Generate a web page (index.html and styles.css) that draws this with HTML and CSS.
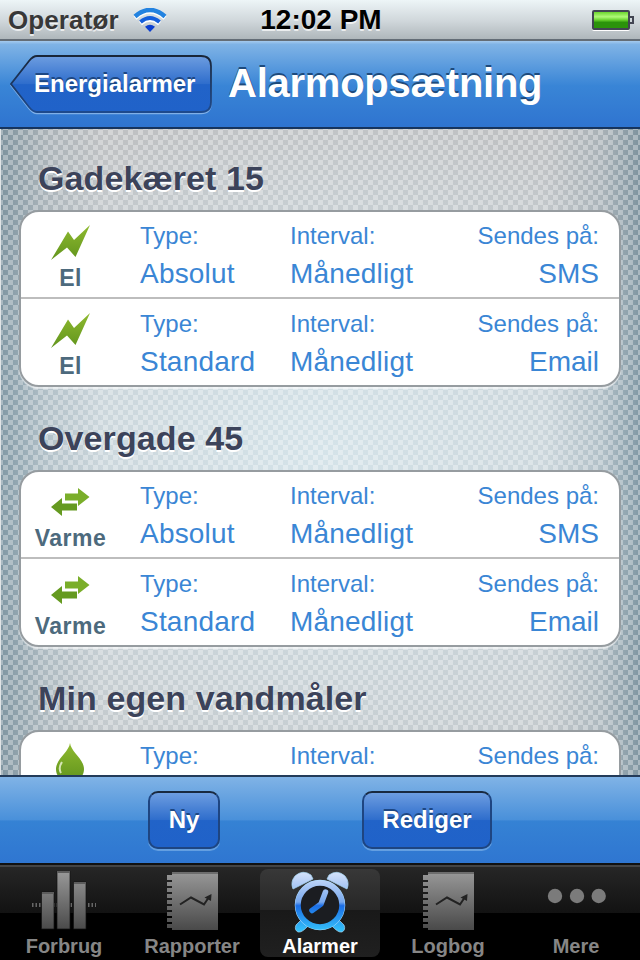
FILE: index.html
```
<!doctype html>
<html lang="da">
<head>
	<meta charset="UTF-8">
	<meta name="viewport" content="width=device-width, initial-scale=1.0">
	<title>Alarmopsætning</title>
	<link rel="stylesheet" href="styles.css">
</head>
<body>
	<!-- shared shapes -->
	<svg class="defs" width="0" height="0">
		<defs>
			<linearGradient id="green" x1="0" y1="0" x2="0" y2="1">
				<stop offset="0" stop-color="#8fba2f"/>
				<stop offset="1" stop-color="#61941d"/>
			</linearGradient>
			<linearGradient id="gray" gradientUnits="userSpaceOnUse" x1="0" y1="0" x2="0" y2="60">
				<stop offset="0" stop-color="#999"/>
				<stop offset="1" stop-color="#484848"/>
			</linearGradient>
			<symbol id="bolt" viewBox="0 0 40 36">
				<path fill="url(#green)" d="M39 0 L24.500 32 L16 22.500 L0 35 L17 6.500 L23 15 Z"/>
			</symbol>
			<symbol id="arrows" viewBox="0 0 40 30">
				<path fill="#7aae2a" d="M14 5.500 H27 V0 L38.500 9 L27 18 V12.500 H14 Z"/>
				<path fill="#659a20" d="M26 15.500 H11 V10 L0 19 L11 28 V22.500 H26 Z"/>
			</symbol>
			<symbol id="drop" viewBox="0 0 30 38">
				<path fill="url(#green)" d="M15 0 C16 9 29 16 29 26 C29 34 23 38 15 38 C7 38 1 34 1 26 C1 16 14 9 15 0 Z"/>
				<path fill="none" stroke="#d6e6b5" stroke-width="2" d="M7 19 Q3 25 6 30"/>
			</symbol>
			<symbol id="notebook" viewBox="0 0 54 60">
				<path fill="url(#gray)" d="M7 1 H53 V59 H7 V57 H2 V53 H7 V51 H2 V47 H7 V45 H2 V41 H7 V39 H2 V35 H7 V33 H2 V29 H7 V27 H2 V23 H7 V21 H2 V17 H7 V15 H2 V11 H7 V9 H2 V4 H7 Z"/>
				<path fill="#6d6d6d" d="M7 1 H53 V3 H7 Z"/>
				<path fill="none" stroke="#222" stroke-width="2" d="M15 33.500 L26 26.500 L39 33.500 L44 26"/>
				<path fill="#222" d="M46.500 23 L39.500 26.500 L46 30 Z"/>
			</symbol>
		</defs>
	</svg>

	<div class="phone">
		<header class="status">
			<div class="carrier">Operatør
				<svg class="wifi" width="34" height="26" viewBox="0 0 34 26">
					<g fill="none" stroke="#fff" stroke-width="4.500" transform="translate(0 1.500)">
						<path d="M2 8.500 Q17 -4.500 32 8.500"/>
						<path d="M7.500 14 Q17 6 26.500 14"/>
					</g>
					<path fill="none" stroke="#2383e0" stroke-width="4.500" d="M2 8.500 Q17 -4.500 32 8.500"/>
					<path fill="none" stroke="#145fdc" stroke-width="4" d="M7.500 14 Q17 6 26.500 14"/>
					<path fill="#0c3fd0" d="M17 24 L12 18.800 Q17 14.500 22 18.800 Z"/>
				</svg>
			</div>
			<div class="clock">12:02 PM</div>
			<div class="battery"><span class="level"></span><span class="cap"></span></div>
		</header>

		<nav class="navbar">
			<a class="back">
				<svg class="back-shape" width="203" height="60" viewBox="0 0 203 60">
					<defs>
						<linearGradient id="btn" x1="0" y1="0" x2="0" y2="1">
							<stop offset="0" stop-color="#6d9de0"/>
							<stop offset=".5" stop-color="#2e6dcc"/>
							<stop offset=".51" stop-color="#2163c8"/>
							<stop offset="1" stop-color="#2062c9"/>
						</linearGradient>
						<linearGradient id="edge" x1="0" y1="0" x2="0" y2="1">
							<stop offset="0" stop-color="#192638"/>
							<stop offset="1" stop-color="#1e4a8d"/>
						</linearGradient>
					</defs>
					<path fill="none" stroke="#7fb0e8" stroke-width="1.500" transform="translate(0 1.500)" d="M27 1 H191 Q201 1 201 11 V47 Q201 57 191 57 H27 Q23 57 19 52 L1 29 L19 6 Q23 1 27 1 Z"/>
					<path fill="url(#btn)" stroke="url(#edge)" stroke-width="1.800" d="M27 1 H191 Q201 1 201 11 V47 Q201 57 191 57 H27 Q23 57 19 52 L1 29 L19 6 Q23 1 27 1 Z"/>
				</svg>
				<span class="back-text">Energialarmer</span>
			</a>
			<h1>Alarmopsætning</h1>
		</nav>

		<main class="content">
			<section>
				<h2>Gadekæret 15</h2>
				<div class="card">
					<div class="row">
						<div class="kind"><svg width="40" height="36"><use href="#bolt"/></svg><b>El</b></div>
						<div class="col type"><span>Type:</span><p>Absolut</p></div>
						<div class="col"><span>Interval:</span><p>Månedligt</p></div>
						<div class="col send"><span>Sendes på:</span><p>SMS</p></div>
					</div>
					<div class="row">
						<div class="kind"><svg width="40" height="36"><use href="#bolt"/></svg><b>El</b></div>
						<div class="col type"><span>Type:</span><p>Standard</p></div>
						<div class="col"><span>Interval:</span><p>Månedligt</p></div>
						<div class="col send"><span>Sendes på:</span><p>Email</p></div>
					</div>
				</div>
			</section>
			<section>
				<h2>Overgade 45</h2>
				<div class="card">
					<div class="row">
						<div class="kind"><svg class="low" width="40" height="30"><use href="#arrows"/></svg><b>Varme</b></div>
						<div class="col type"><span>Type:</span><p>Absolut</p></div>
						<div class="col"><span>Interval:</span><p>Månedligt</p></div>
						<div class="col send"><span>Sendes på:</span><p>SMS</p></div>
					</div>
					<div class="row">
						<div class="kind"><svg class="low" width="40" height="30"><use href="#arrows"/></svg><b>Varme</b></div>
						<div class="col type"><span>Type:</span><p>Standard</p></div>
						<div class="col"><span>Interval:</span><p>Månedligt</p></div>
						<div class="col send"><span>Sendes på:</span><p>Email</p></div>
					</div>
				</div>
			</section>
			<section>
				<h2>Min egen vandmåler</h2>
				<div class="card">
					<div class="row">
						<div class="kind water"><svg width="30" height="38"><use href="#drop"/></svg></div>
						<div class="col type"><span>Type:</span></div>
						<div class="col"><span>Interval:</span></div>
						<div class="col send"><span>Sendes på:</span></div>
					</div>
				</div>
			</section>
		</main>

		<div class="toolbar">
			<button type="button" class="new">Ny</button>
			<button type="button" class="edit">Rediger</button>
		</div>

		<footer class="tabs">
			<div class="tab">
				<svg width="66" height="60" viewBox="0 0 66 60">
					<path stroke="#666" stroke-width="4" stroke-dasharray="1.500 2" d="M1 34 H65"/>
					<path fill="url(#gray)" stroke="#111" stroke-width=".7" d="M10.500 21 H23 V58 H10.500 Z M26 0 H39 V58 H26 Z M42.500 11 H55 V58 H42.500 Z"/>
					<path fill="#5c5c5c" d="M11 21 H23 V23 H11 Z M26 0 H39 V2 H26 Z M43 11 H55 V13 H43 Z"/>
				</svg>
				<span>Forbrug</span>
			</div>
			<div class="tab">
				<svg width="54" height="60"><use href="#notebook"/></svg>
				<span>Rapporter</span>
			</div>
			<div class="tab active">
				<svg width="60" height="62" viewBox="0 0 60 62">
					<defs>
						<linearGradient id="clock" gradientUnits="userSpaceOnUse" x1="0" y1="0" x2="0" y2="62">
							<stop offset="0" stop-color="#d9e5fb"/>
							<stop offset=".5" stop-color="#78a8ed"/>
							<stop offset=".56" stop-color="#1c6ee6"/>
							<stop offset="1" stop-color="#36c8fb"/>
						</linearGradient>
					</defs>
					<g fill="url(#clock)" stroke="#a8d8f5" stroke-width=".7">
						<path d="M3 18 Q0 11 5 5 Q13 -2 21 4 L23 8 Z"/>
						<path d="M57 18 Q60 11 55 5 Q47 -2 39 4 L37 8 Z"/>
						<path d="M12 48 L6 54 Q4 59 8 61 Q12 62 19 54 Z M48 48 L54 54 Q56 59 52 61 Q48 62 41 54 Z"/>
					</g>
					<circle cx="30" cy="34" r="22" fill="none" stroke="#aadcff" stroke-width="6.500"/>
					<circle cx="30" cy="34" r="22" fill="#1b1d21" stroke="url(#clock)" stroke-width="5.500"/>
					<path fill="none" stroke="url(#clock)" stroke-width="5.500" stroke-linecap="round" stroke-linejoin="round" d="M35.500 21 L31 33 L22 39.500"/>
				</svg>
				<span>Alarmer</span>
			</div>
			<div class="tab">
				<svg width="54" height="60"><use href="#notebook"/></svg>
				<span>Logbog</span>
			</div>
			<div class="tab">
				<svg width="60" height="60" viewBox="0 0 60 60">
					<g fill="#7b7b7b">
						<circle cx="9" cy="25" r="7.200"/>
						<circle cx="31" cy="25" r="7.200"/>
						<circle cx="52.700" cy="25" r="7.200"/>
					</g>
				</svg>
				<span>Mere</span>
			</div>
		</footer>
	</div>
</body>
</html>
```

FILE: styles.css
```
* {
	margin: 0;
	padding: 0;
	box-sizing: border-box;
}
body {
	background: #000;
	font-family: "Liberation Sans", Arial, Helvetica, sans-serif;
}
.defs {
	display: block;
}
.phone {
	display: flex;
	flex-direction: column;
	width: 640px;
	height: 960px;
	overflow: hidden;
}

/* status bar */
.status {
	display: grid;
	grid-template-columns: 1fr auto 1fr;
	align-items: center;
	height: 41px;
	padding: 1px 6px 0 8px;
	background: linear-gradient(#edf5f7, #cfd6da 55%, #afb7bb);
	border-bottom: 2px solid #646d76;
	font-weight: bold;
	text-shadow: 0 2px 0 rgba(255, 255, 255, 0.7);
}
.carrier {
	display: flex;
	align-items: center;
	gap: 14px;
	padding-top: 1px;
	font-size: 26px;
	letter-spacing: 0.1px;
	color: #383838;
}
.clock {
	font-size: 28px;
}
.battery {
	display: flex;
	align-items: center;
	justify-self: end;
}
.level {
	width: 38px;
	height: 20px;
	border: 2px solid #424552;
	border-radius: 2px;
	background: linear-gradient(#6bd52e, #b0f878 30%, #68d22d 50%, #2b930b 65%, #2b930b);
	box-shadow: 0 1px 0 #fff;
}
.cap {
	width: 4px;
	height: 8px;
	border: 2px solid #424552;
	border-left: 0;
}

/* navigation bar */
.navbar {
	display: flex;
	align-items: center;
	gap: 15px;
	height: 88px;
	padding: 2px 0 0 10px;
	background: linear-gradient(#a5caee, #7fb3e6 4%, #3985d6 52%, #2f74d0);
	border-bottom: 2px solid #16345e;
}
.back {
	display: grid;
	align-items: center;
}
.back-shape, .back-text {
	grid-area: 1 / 1;
}
.back-text {
	padding: 0 0 2px 24px;
	font-size: 24px;
	font-weight: bold;
	color: #fff;
	text-shadow: 0 -2px 0 #1d4783;
}
h1 {
	padding-bottom: 4px;
	font-size: 40px;
	line-height: 46px;
	letter-spacing: -0.25px;
	color: #fff;
	text-shadow: 0 -2px 0 #1d4a7c;
}

/* list */
.content {
	flex: 1;
	min-height: 0;
	overflow: hidden;
	padding: 0 19px;
	background:
		repeating-conic-gradient(rgba(255, 255, 255, 0.32) 0 25%, rgba(80, 95, 105, 0) 0 50%) 2px 1px / 10px 10px,
		linear-gradient(90deg, rgba(83, 116, 133, 0.6), rgba(83, 116, 133, 0.2) 7%, rgba(83, 116, 133, 0) 16%, rgba(83, 116, 133, 0) 85%, rgba(83, 116, 133, 0.2) 94%, rgba(83, 116, 133, 0.6)),
		radial-gradient(ellipse 60% 55% at 50% 50%, rgba(215, 230, 236, 0.9), rgba(215, 230, 236, 0)),
		linear-gradient(#bfc1c3, #c5cdd2 40%, #c5ced3 60%, #c3c8cb);
	border-left: 1px solid #dfe3e5;
}
section {
	height: 260px;
	margin-left: -1px;
}
h2 {
	height: 81px;
	padding: 29px 0 0 19px;
	font-size: 34px;
	line-height: 40px;
	letter-spacing: 0.1px;
	color: #3c435a;
	text-shadow: 0 2px 0 #fff;
}
.card {
	background: #fff;
	border: 2px solid #969ca0;
	border-radius: 20px;
	box-shadow: 0 2px 1px rgba(255, 255, 255, 0.6);
}
.row {
	display: grid;
	grid-template-columns: 119px 150px 150px 1fr;
	height: 85px;
	padding-right: 20px;
}
.row + .row {
	height: 88px;
	padding-top: 1px;
	border-top: 2px solid #bdbdbd;
}
.kind {
	display: flex;
	flex-direction: column;
	align-items: center;
	padding: 13px 20px 0 0;
}
.kind b {
	margin-top: auto;
	padding-bottom: 5px;
	font-size: 23px;
	line-height: 28px;
	letter-spacing: 0.5px;
	color: #4d6a7d;
}
.water {
	padding-top: 11px;
	padding-right: 21px;
}
.low {
	margin-top: 3px;
}
.col {
	padding-top: 9px;
	color: #3a86d5;
}
.col span {
	display: block;
	font-size: 24px;
	line-height: 30px;
}
.col p {
	padding-top: 6px;
	font-size: 28px;
	line-height: 34px;
	letter-spacing: 0.2px;
}
.send {
	text-align: right;
}
.send p {
	letter-spacing: 0;
}

/* bottom toolbar */
.toolbar {
	display: flex;
	justify-content: center;
	gap: 142px;
	height: 88px;
	padding-top: 14px;
	background: linear-gradient(#80b3e6, #4990da 50%, #3582d4 51%, #2f76d1);
	border-top: 2px solid #233b59;
}
button {
	height: 58px;
	border: 2px solid #1e4581;
	border-top-color: #19293f;
	border-radius: 10px;
	background: linear-gradient(#6d9de0, #2e6dcc 50%, #2163c8 51%, #2062c9);
	box-shadow: 0 2px 0 rgba(150, 195, 240, 0.5);
	font-family: inherit;
	font-size: 24px;
	font-weight: bold;
	color: #fff;
	text-shadow: 0 -2px 0 #1d4783;
}
.new {
	width: 72px;
}
.edit {
	width: 130px;
}

/* tab bar */
.tabs {
	display: flex;
	height: 97px;
	padding-top: 4px;
	background: linear-gradient(#111 0 2px, #444 2px 4px, #262626 4px, #121212 50px, #000 50px);
}
.tab {
	display: flex;
	flex: 1;
	flex-direction: column;
	align-items: center;
	justify-content: space-between;
	margin: 2px 4px 3px;
	padding: 2px 0 0;
	font-size: 20px;
	font-weight: bold;
	line-height: 22px;
	color: #868686;
}
.active {
	border-radius: 8px;
	background: linear-gradient(#383838, #272727 46%, #191919 47%, #202020);
	color: #fff;
}
```
